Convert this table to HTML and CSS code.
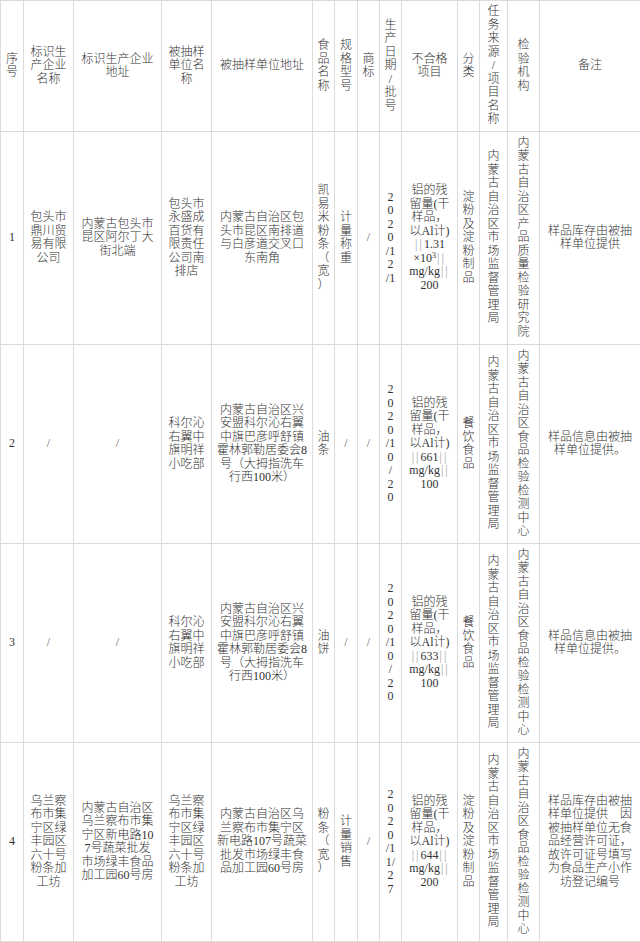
FILE: index.html
```html
<!DOCTYPE html>
<html lang="zh-CN">
<head>
<meta charset="utf-8">
<title>不合格产品信息</title>
<link rel="stylesheet" href="styles.css">
</head>
<body>
<table class="sheet">
  <colgroup>
    <col class="c1"><col class="c2"><col class="c3"><col class="c4"><col class="c5">
    <col class="c6"><col class="c7"><col class="c8"><col class="c9"><col class="c10">
    <col class="c11"><col class="c12"><col class="c13"><col class="c14">
  </colgroup>
  <tr class="head">
    <td>序<br>号</td>
    <td>标识生<br>产企业<br>名称</td>
    <td>标识生产企业<br>地址</td>
    <td>被抽样<br>单位名<br>称</td>
    <td>被抽样单位地址</td>
    <td>食<br>品<br>名<br>称</td>
    <td>规<br>格<br>型<br>号</td>
    <td>商<br>标</td>
    <td>生<br>产<br>日<br>期<br>/<br>批<br>号</td>
    <td>不合格<br>项目</td>
    <td>分<br>类</td>
    <td>任<br>务<br>来<br>源<br>/<br>项<br>目<br>名<br>称</td>
    <td>检<br>验<br>机<br>构</td>
    <td>备注</td>
  </tr>
  <tr class="r1">
    <td>1</td>
    <td>包头市<br>鼎川贸<br>易有限<br>公司</td>
    <td>内蒙古包头市<br>昆区阿尔丁大<br>街北端</td>
    <td>包头市<br>永盛成<br>百货有<br>限责任<br>公司南<br>排店</td>
    <td>内蒙古自治区包<br>头市昆区南排道<br>与白彦道交叉口<br>东南角</td>
    <td>凯<br>易<br>米<br>粉<br>条<br>（<br>宽<br>）</td>
    <td>计<br>量<br>称<br>重</td>
    <td class="sl">/</td>
    <td>2<br>0<br>2<br>0<br>/1<br>2<br>/1</td>
    <td>铝的残<br>留量(干<br>样品，<br>以Al计)<br><span class="bar">||</span>1.31<br>×10<sup>3</sup><span class="bar">||</span><br>mg/kg<span class="bar">||</span><br>200</td>
    <td>淀<br>粉<br>及<br>淀<br>粉<br>制<br>品</td>
    <td>内<br>蒙<br>古<br>自<br>治<br>区<br>市<br>场<br>监<br>督<br>管<br>理<br>局</td>
    <td>内<br>蒙<br>古<br>自<br>治<br>区<br>产<br>品<br>质<br>量<br>检<br>验<br>研<br>究<br>院</td>
    <td>样品库存由被抽<br>样单位提供</td>
  </tr>
  <tr class="r2">
    <td>2</td>
    <td class="sl">/</td>
    <td class="sl">/</td>
    <td>科尔沁<br>右翼中<br>旗明祥<br>小吃部</td>
    <td>内蒙古自治区兴<br>安盟科尔沁右翼<br>中旗巴彦呼舒镇<br>霍林郭勒居委会8<br>号（大拇指洗车<br>行西100米）</td>
    <td>油<br>条</td>
    <td class="sl">/</td>
    <td class="sl">/</td>
    <td>2<br>0<br>2<br>0<br>/1<br>0<br>/<br>2<br>0</td>
    <td>铝的残<br>留量(干<br>样品，<br>以Al计)<br><span class="bar">||</span>661<span class="bar">||</span><br>mg/kg<span class="bar">||</span><br>100</td>
    <td>餐<br>饮<br>食<br>品</td>
    <td>内<br>蒙<br>古<br>自<br>治<br>区<br>市<br>场<br>监<br>督<br>管<br>理<br>局</td>
    <td>内<br>蒙<br>古<br>自<br>治<br>区<br>食<br>品<br>检<br>验<br>检<br>测<br>中<br>心</td>
    <td>样品信息由被抽<br>样单位提供。</td>
  </tr>
  <tr class="r3">
    <td>3</td>
    <td class="sl">/</td>
    <td class="sl">/</td>
    <td>科尔沁<br>右翼中<br>旗明祥<br>小吃部</td>
    <td>内蒙古自治区兴<br>安盟科尔沁右翼<br>中旗巴彦呼舒镇<br>霍林郭勒居委会8<br>号（大拇指洗车<br>行西100米）</td>
    <td>油<br>饼</td>
    <td class="sl">/</td>
    <td class="sl">/</td>
    <td>2<br>0<br>2<br>0<br>/1<br>0<br>/<br>2<br>0</td>
    <td>铝的残<br>留量(干<br>样品，<br>以Al计)<br><span class="bar">||</span>633<span class="bar">||</span><br>mg/kg<span class="bar">||</span><br>100</td>
    <td>餐<br>饮<br>食<br>品</td>
    <td>内<br>蒙<br>古<br>自<br>治<br>区<br>市<br>场<br>监<br>督<br>管<br>理<br>局</td>
    <td>内<br>蒙<br>古<br>自<br>治<br>区<br>食<br>品<br>检<br>验<br>检<br>测<br>中<br>心</td>
    <td>样品信息由被抽<br>样单位提供。</td>
  </tr>
  <tr class="r4">
    <td>4</td>
    <td>乌兰察<br>布市集<br>宁区绿<br>丰园区<br>六十号<br>粉条加<br>工坊</td>
    <td>内蒙古自治区<br>乌兰察布市集<br>宁区新电路10<br>7号蔬菜批发<br>市场绿丰食品<br>加工园60号房</td>
    <td>乌兰察<br>布市集<br>宁区绿<br>丰园区<br>六十号<br>粉条加<br>工坊</td>
    <td>内蒙古自治区乌<br>兰察布市集宁区<br>新电路107号蔬菜<br>批发市场绿丰食<br>品加工园60号房</td>
    <td>粉<br>条<br>（<br>宽<br>）</td>
    <td>计<br>量<br>销<br>售</td>
    <td class="sl">/</td>
    <td>2<br>0<br>2<br>0<br>/1<br>1/<br>2<br>7</td>
    <td>铝的残<br>留量(干<br>样品，<br>以Al计)<br><span class="bar">||</span>644<span class="bar">||</span><br>mg/kg<span class="bar">||</span><br>200</td>
    <td>淀<br>粉<br>及<br>淀<br>粉<br>制<br>品</td>
    <td>内<br>蒙<br>古<br>自<br>治<br>区<br>市<br>场<br>监<br>督<br>管<br>理<br>局</td>
    <td>内<br>蒙<br>古<br>自<br>治<br>区<br>食<br>品<br>检<br>验<br>检<br>测<br>中<br>心</td>
    <td>样品库存由被抽<br>样单位提供　因<br>被抽样单位无食<br>品经营许可证，<br>故许可证号填写<br>为食品生产小作<br>坊登记编号</td>
  </tr>
</table>
</body>
</html>
```

FILE: styles.css
```css
html, body {
  margin: 0;
  padding: 0;
  background: #ffffff;
}

.sheet {
  border-collapse: collapse;
  table-layout: fixed;
  width: 640px;
  font-family: "Liberation Serif", "Noto Sans CJK SC", serif;
  font-size: 12px;
  font-weight: 300;
  line-height: 13.5px;
  color: #333333;
}

.sheet td {
  border: 1px solid #dcdcdc;
  padding: 0 1px;
  text-align: center;
  vertical-align: middle;
  white-space: nowrap;
  overflow: hidden;
}

.c1 { width: 23px; }
.c2 { width: 50px; }
.c3 { width: 88px; }
.c4 { width: 50px; }
.c5 { width: 101px; }
.c6 { width: 22px; }
.c7 { width: 23px; }
.c8 { width: 22px; }
.c9 { width: 22px; }
.c10 { width: 56px; }
.c11 { width: 22px; }
.c12 { width: 28px; }
.c13 { width: 32px; }
.c14 { width: 101px; }

.head { height: 131px; }
.r1 { height: 213px; }
.r2 { height: 199px; }
.r3 { height: 199px; }
.r4 { height: 199px; }

.sl {
  color: #666666;
}

.bar {
  color: #a0a0a0;
  letter-spacing: 2px;
  padding-left: 1px;
}

.sheet sup {
  font-size: 8px;
  line-height: 0;
  vertical-align: 4px;
}
```
